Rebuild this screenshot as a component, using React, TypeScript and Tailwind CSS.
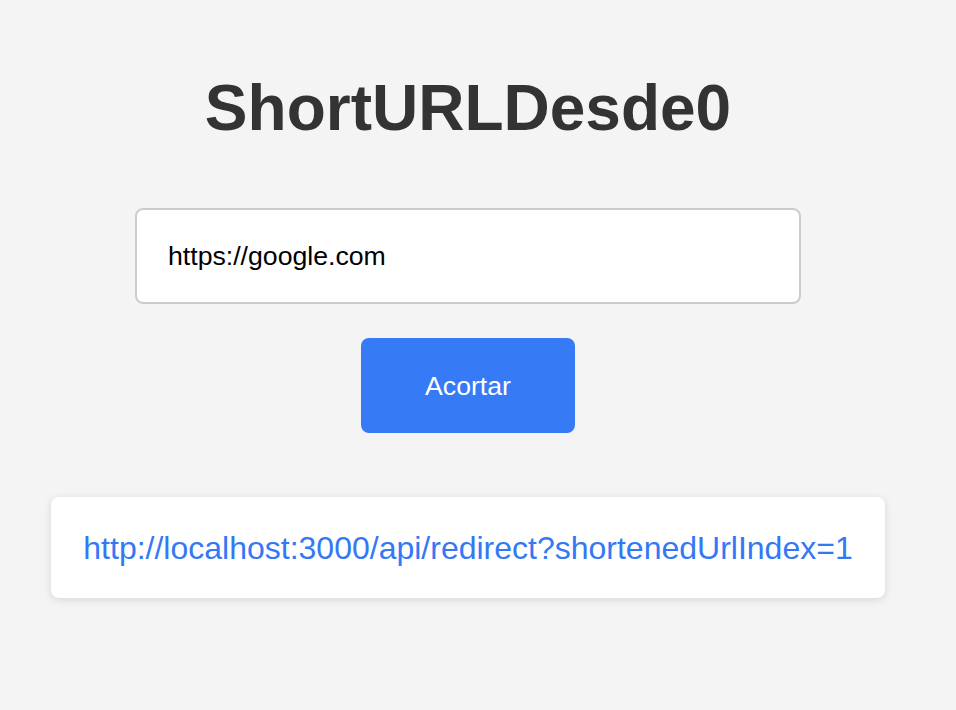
export default function App() {
  return (
    <div className="min-h-[710px] w-full bg-[#f4f4f4] font-['Liberation_Sans',Arial,sans-serif]">
      <div className="w-[936px] flex flex-col items-center pt-[76px]">
        <h1 className="text-[64px] leading-[64px] font-bold text-[#333333]">ShortURLDesde0</h1>
        <input
          type="text"
          defaultValue="https://google.com"
          className="mt-[68px] w-[666px] h-[96px] rounded-[8px] border-2 border-[#cccccc] bg-white px-[31px] text-[26.67px] text-black outline-none"
        />
        <button className="mt-[34px] w-[214px] h-[95px] rounded-[8px] bg-[#367af6] text-white text-[26.67px]">
          Acortar
        </button>
        <div className="mt-[64px] w-[834px] h-[101px] rounded-[8px] bg-white shadow-[0_2px_8px_rgba(0,0,0,0.12)] flex items-center justify-center">
          <a href="#" className="text-[#3478f6] text-[32px]">
            http://localhost:3000/api/redirect?shortenedUrlIndex=1
          </a>
        </div>
      </div>
    </div>
  );
}
